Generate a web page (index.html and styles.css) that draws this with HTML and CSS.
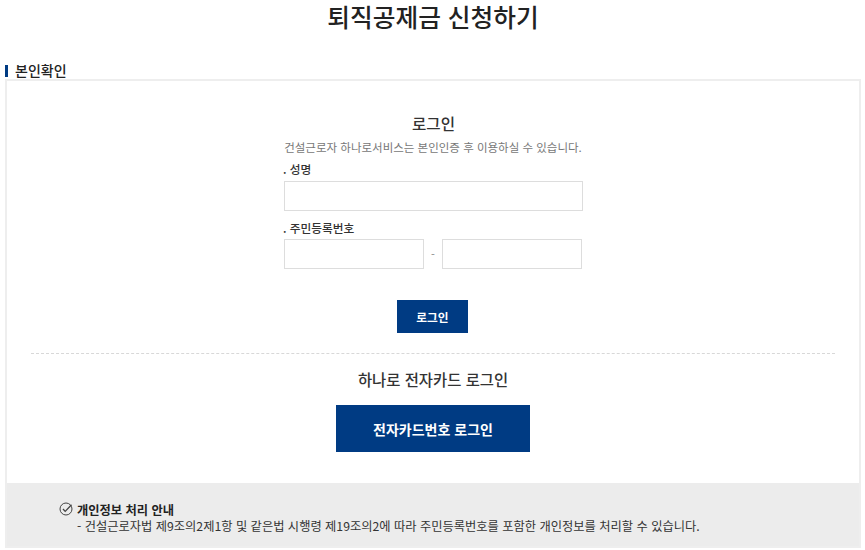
FILE: index.html
```html
<!DOCTYPE html>
<html lang="ko">
<head>
  <meta charset="UTF-8">
  <title>퇴직공제금 신청하기</title>
  <link rel="stylesheet" href="styles.css">
</head>
<body>

  <h1 class="page-title">퇴직공제금 신청하기</h1>

  <h2 class="section-title">본인확인</h2>

  <div class="login-box">
    <div class="login-form">
      <h3 class="login-title">로그인</h3>
      <p class="login-desc">건설근로자 하나로서비스는 본인인증 후 이용하실 수 있습니다.</p>

      <label class="field-label" for="name">. 성명</label>
      <input class="field-input" type="text" id="name">

      <label class="field-label field-label-jumin" for="jumin1">. 주민등록번호</label>
      <div class="jumin-row">
        <input class="field-input jumin-input" type="text" id="jumin1">
        <span class="jumin-dash">-</span>
        <input class="field-input jumin-input" type="password" id="jumin2">
      </div>

      <button type="button" class="btn-login">로그인</button>
    </div>

    <div class="card-login">
      <h3 class="card-title">하나로 전자카드 로그인</h3>
      <button type="button" class="btn-card">전자카드번호 로그인</button>
    </div>

    <div class="notice">
      <svg class="notice-icon" width="14" height="14" viewBox="0 0 14 14" fill="none" stroke="#444" stroke-width="1">
        <circle cx="7" cy="7" r="6"/>
        <path d="M4 7l2.2 2.4L12.5 2.8" stroke-width="1.3"/>
      </svg>
      <div class="notice-text">
        <strong>개인정보 처리 안내</strong>
        <p>- 건설근로자법 제9조의2제1항 및 같은법 시행령 제19조의2에 따라 주민등록번호를 포함한 개인정보를 처리할 수 있습니다.</p>
      </div>
    </div>
  </div>

</body>
</html>
```

FILE: styles.css
```css
body {
  margin: 0;
  padding: 0 4px 0 5px;
  background: #fff;
  color: #333;
  font-family: "Noto Sans CJK KR", "Liberation Sans", sans-serif;
  overflow: hidden;
}

.page-title {
  margin: 0;
  height: 62px;
  font-size: 24.7px;
  line-height: 33px;
  font-weight: 500;
  text-align: center;
  color: #222;
}

.section-title {
  margin: 0;
  height: 17px;
  padding-left: 10px;
  font-size: 14px;
  line-height: 17px;
  font-weight: 500;
  color: #222;
  position: relative;
}

/* 제목 왼쪽 파란 막대 */
.section-title::before {
  content: "";
  position: absolute;
  left: 0;
  top: 3px;
  width: 3px;
  height: 12px;
  background: #003b83;
}

.login-box {
  border: 2px solid #eee;
  height: 465px;
  display: flex;
  flex-direction: column;
}

.login-form {
  width: 299px;
  margin: 0 auto;
  padding: 31px 0 0 1px;
}

.login-title {
  margin: 0;
  font-size: 15.6px;
  line-height: 22px;
  font-weight: 500;
  text-align: center;
  color: #333;
}

.login-desc {
  margin: 4px 0 0 -1px;
  font-size: 11.5px;
  line-height: 18px;
  color: #777;
  text-align: center;
  white-space: nowrap;
}

.field-label {
  display: block;
  margin: 5px 0 0 -1px;
  font-size: 11.7px;
  line-height: 16px;
  font-weight: 500;
  color: #333;
}

.field-label-jumin {
  margin-top: 9px;
}

.field-input {
  display: block;
  box-sizing: border-box;
  width: 299px;
  height: 30px;
  margin-top: 4px;
  border: 1px solid #ddd;
  background: #fff;
  padding: 0 8px;
}

.jumin-row {
  display: flex;
  align-items: center;
  margin-top: 3px;
  width: 298px;
}

.jumin-input {
  width: 140px;
  margin-top: 0;
}

.jumin-dash {
  flex: 1;
  text-align: center;
  font-size: 11px;
  color: #888;
}

.btn-login {
  display: block;
  width: 71px;
  height: 33px;
  margin: 31px 0 0 113px;
  padding: 0;
  border: 0;
  background: #003b83;
  color: #fff;
  font-family: inherit;
  font-size: 11.7px;
  font-weight: 700;
}

.card-login {
  margin: 20px 24px 0;
  padding-top: 14px;
  border-top: 1px dashed #d8d8d8;
  text-align: center;
}

.card-title {
  margin: 0;
  font-size: 15.4px;
  line-height: 22px;
  font-weight: 500;
  color: #333;
}

.btn-card {
  display: block;
  width: 194px;
  height: 47px;
  margin: 15px auto 0;
  padding: 0;
  border: 0;
  background: #003b83;
  color: #fff;
  font-family: inherit;
  font-size: 14px;
  font-weight: 700;
}

.notice {
  margin-top: auto;
  height: 63px;
  box-sizing: border-box;
  background: #ececec;
  padding: 19px 0 0 52px;
  display: flex;
  gap: 4px;
}

.notice-icon {
  margin-top: 0;
  flex: none;
}

.notice-text {
  font-size: 12.25px;
  line-height: 16px;
  color: #333;
}

.notice-text strong {
  font-weight: 700;
  color: #222;
}

.notice-text p {
  margin: 0;
  white-space: nowrap;
}
```
